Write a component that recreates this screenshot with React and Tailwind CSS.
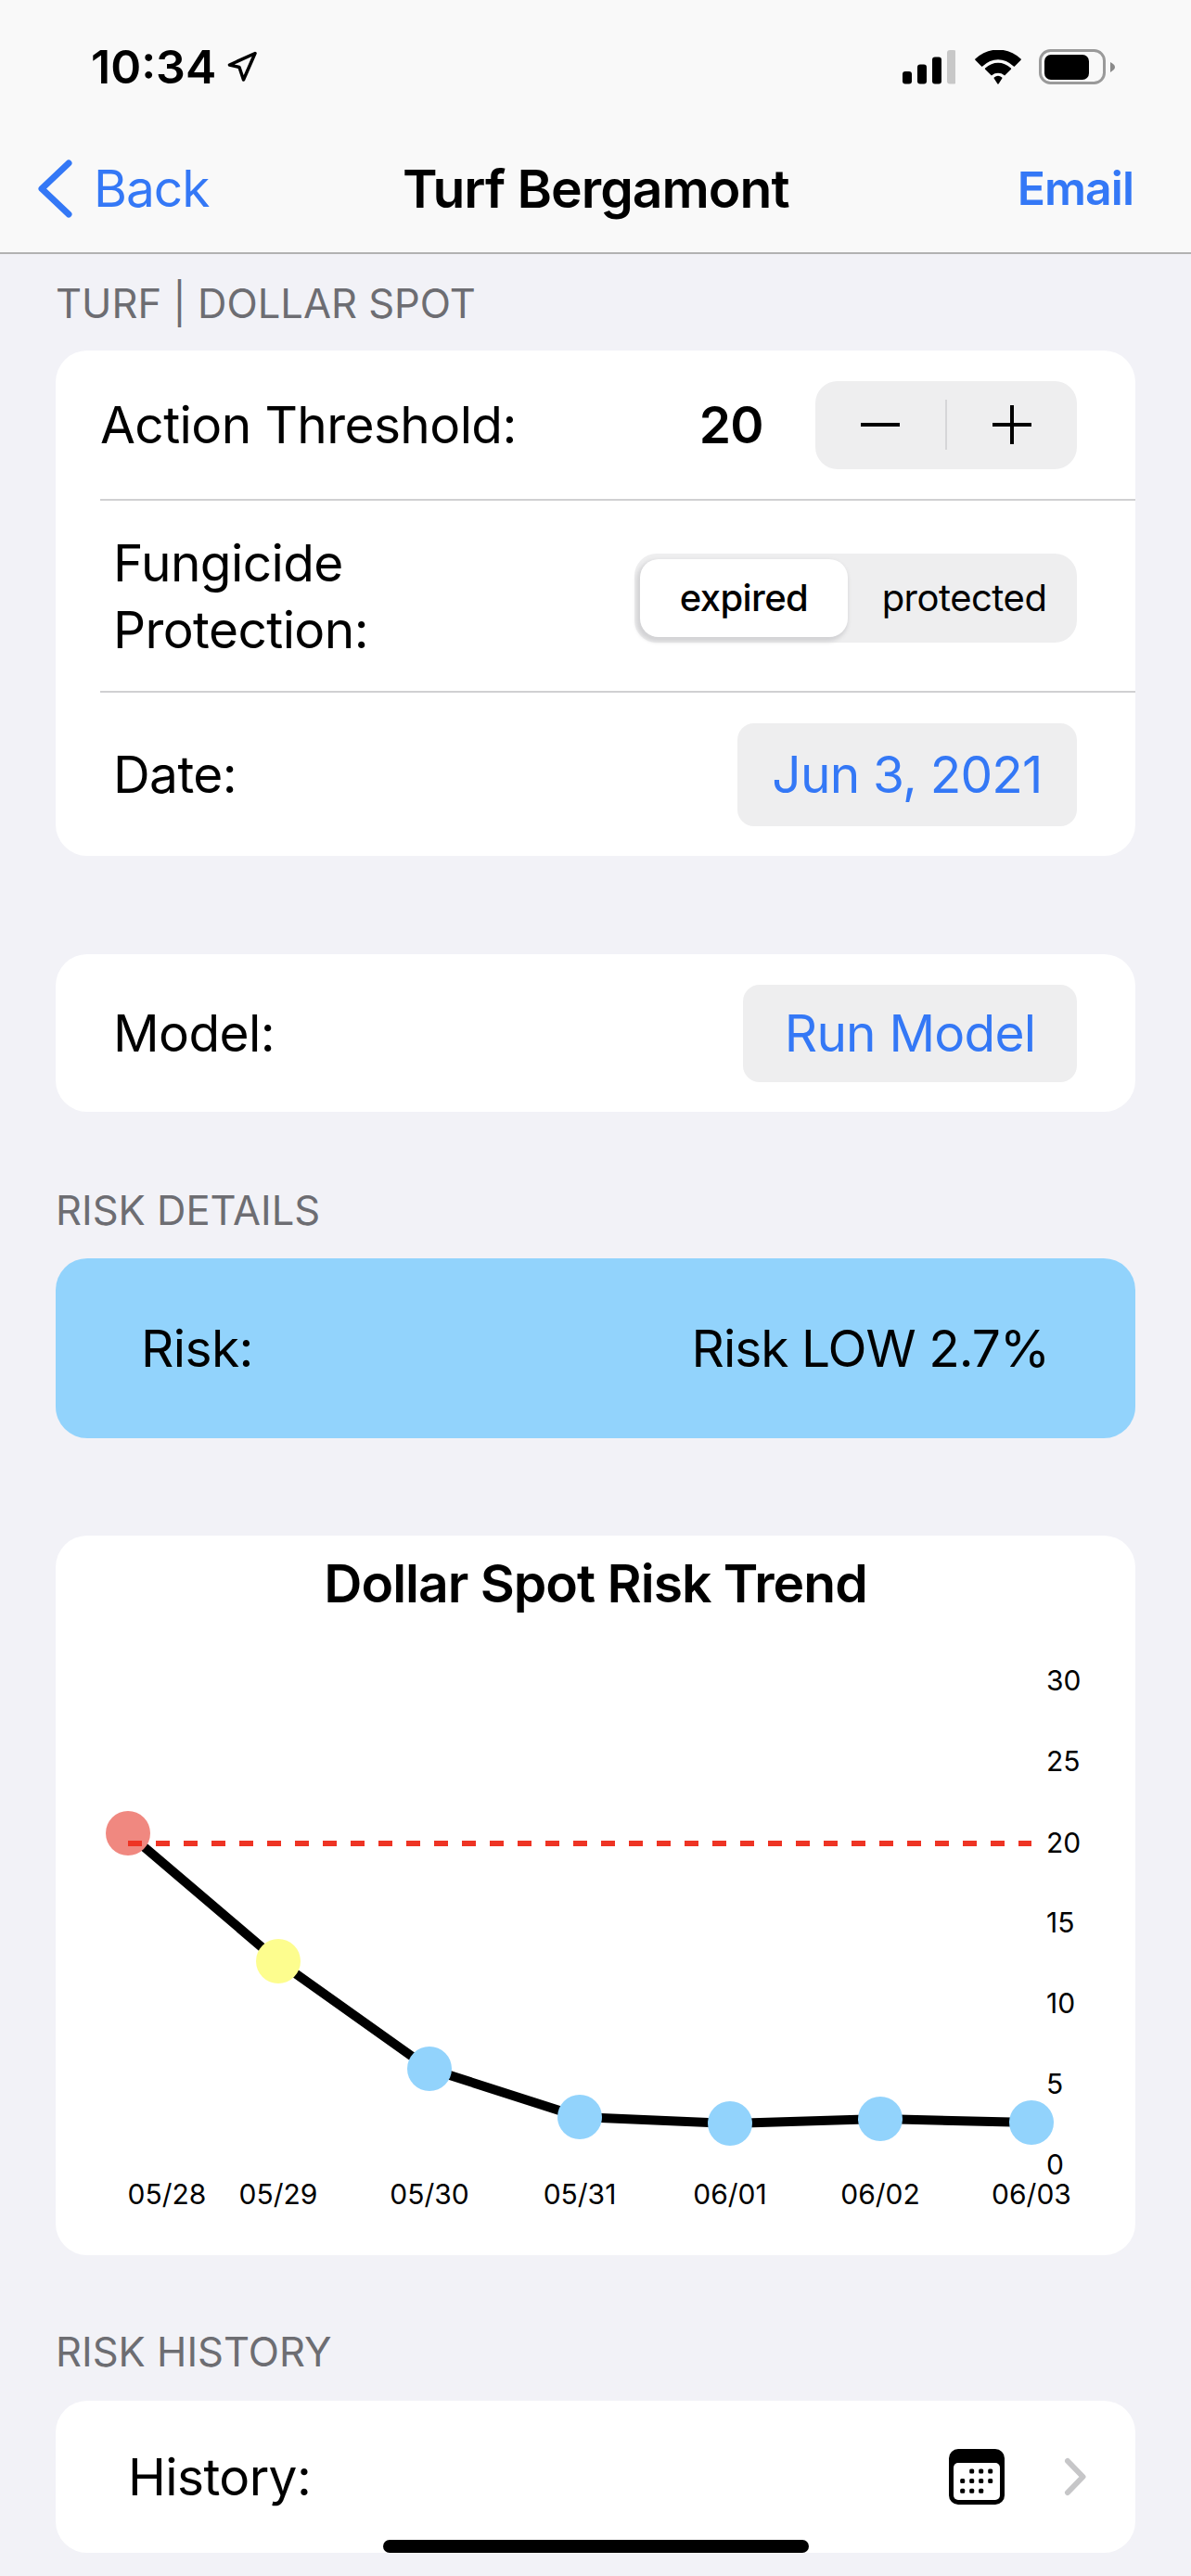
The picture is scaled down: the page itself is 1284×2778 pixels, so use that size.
import React from "react";

const points = [
  { x: 138, y: 1977, color: "#f08880" },
  { x: 300, y: 2115, color: "#fdfd8e" },
  { x: 463, y: 2231, color: "#92d3fc" },
  { x: 625, y: 2283, color: "#92d3fc" },
  { x: 787, y: 2290, color: "#92d3fc" },
  { x: 949, y: 2285, color: "#92d3fc" },
  { x: 1112, y: 2289, color: "#92d3fc" },
];

const yLabels = [
  ["30", 1812],
  ["25", 1899],
  ["20", 1987],
  ["15", 2073],
  ["10", 2160],
  ["5", 2247],
  ["0", 2334],
];

const xLabels = [
  ["05/28", 180],
  ["05/29", 300],
  ["05/30", 463],
  ["05/31", 625],
  ["06/01", 787],
  ["06/02", 949],
  ["06/03", 1112],
];

const calendarDots = [
  [24.7, 34.7, 44.7],
  [14.7, 24.7, 34.7, 44.7],
  [14.7, 24.7, 34.7],
];

const SectionLabel = ({ children, className }) => (
  <div className={`text-[43.5px] leading-[48px] text-[#6d6d72] ${className}`}>
    {children}
  </div>
);

const StatusIcons = () => (
  <div className="flex items-center">
    <svg width="57" height="38" viewBox="0 0 57 38">
      <rect x="0" y="24" width="10" height="13.5" rx="3" fill="#000" />
      <rect x="16" y="16.5" width="10" height="21" rx="3" fill="#000" />
      <rect x="32" y="8.5" width="10" height="29" rx="3" fill="#000" />
      <rect x="48" y="1" width="10" height="36.5" rx="3" fill="#c8c8c8" />
    </svg>
    <svg width="50" height="37" viewBox="0 0 150 110" className="ml-[21px]">
      <path d="M3 30 C44 -9 106 -9 147 30 L127 50 C95 20 55 20 23 50 Z" fill="#000" stroke="#000" strokeWidth="5" strokeLinejoin="round" />
      <path d="M35 60 C60 38 90 38 115 60 L96 79 C85 69 65 69 54 79 Z" fill="#000" stroke="#000" strokeWidth="5" strokeLinejoin="round" />
      <path d="M64 90 C71 84 79 84 86 90 L75 107 Z" fill="#000" stroke="#000" strokeWidth="5" strokeLinejoin="round" />
    </svg>
    <svg width="82" height="38" viewBox="0 0 82 38" className="ml-[19px]">
      <rect x="1.5" y="1.5" width="69" height="35" rx="11" fill="none" stroke="#9a9a9a" strokeWidth="3" />
      <rect x="6" y="6" width="48" height="27" rx="7" fill="#000" />
      <path d="M77 14 C80 16 82 17 82 19.5 C82 21.5 80 23 77 25 Z" fill="#8a8a8a" />
    </svg>
  </div>
);

const Header = () => (
  <div className="h-[274px] bg-[#f9f9f9] border-b-[2px] border-[#b2b2b2] flex flex-col">
    <div className="h-[144px] pl-[98px] pr-[82px] flex items-center justify-between">
      <div className="flex items-center gap-[12px]">
        <span className="text-[50px] font-semibold leading-none">10:34</span>
        <svg width="32" height="34" viewBox="0 0 32 34">
          <path d="M30 2.5 L2.5 15 L13 17.5 L17.5 31 Z" fill="none" stroke="#000" strokeWidth="3.5" strokeLinejoin="round" />
        </svg>
      </div>
      <StatusIcons />
    </div>
    <div className="flex-1 relative flex items-center justify-between pl-[40px] pr-[62px] pb-[10px]">
      <div className="flex items-center gap-[23px] text-[#3478f6]">
        <svg width="38" height="63" viewBox="0 0 38 63">
          <path d="M34 4 L5 31.5 L34 59" fill="none" stroke="#3478f6" strokeWidth="7" strokeLinecap="round" strokeLinejoin="round" />
        </svg>
        <span className="text-[55px] leading-none tracking-[-1px]">Back</span>
      </div>
      <span className="absolute left-[434px] text-[57px] font-semibold leading-none tracking-[-1px]">Turf Bergamont</span>
      <span className="text-[#3478f6] text-[50px] font-semibold leading-none tracking-[-1px]">Email</span>
    </div>
  </div>
);

const Divider = () => <div className="ml-[48px] h-[2px] bg-[#d0d0d2]" />;

const Stepper = () => (
  <div className="w-[282px] h-[95px] rounded-[24px] bg-[#eeeeef] flex items-center">
    <div className="flex-1 flex justify-center">
      <svg width="44" height="44" viewBox="0 0 44 44">
        <path d="M1 22 H43" stroke="#000" strokeWidth="4" />
      </svg>
    </div>
    <div className="w-[2px] h-[54px] bg-[#d6d6d8]" />
    <div className="flex-1 flex justify-center">
      <svg width="44" height="44" viewBox="0 0 44 44">
        <path d="M1 22 H43 M22 1 V43" stroke="#000" strokeWidth="4" />
      </svg>
    </div>
  </div>
);

const SegmentControl = () => (
  <div className="w-[477px] h-[96px] mt-[4px] rounded-[24px] bg-[#eeeeef] flex items-center pl-[6px]">
    <div className="w-[224px] h-[84px] rounded-[20px] bg-white shadow-[-2px_3px_4px_2px_#d3d3d5] flex items-center justify-center text-[40px] font-medium tracking-[-0.6px]">
      expired
    </div>
    <div className="flex-1 pl-[4px] text-center text-[40px] tracking-[-0.5px]">protected</div>
  </div>
);

const BlueButton = ({ children, className }) => (
  <div className={`rounded-[18px] bg-[#eeeeef] flex items-center justify-center text-[#3478f6] text-[55px] tracking-[-0.8px] ${className}`}>
    {children}
  </div>
);

const Chart = () => (
  <div className="mt-[105px] h-[776px] rounded-[34px] bg-white overflow-hidden">
    <div className="h-[64px] pt-[22px] text-center text-[57px] font-semibold leading-[60px] tracking-[-1px] text-black">
      Dollar Spot Risk Trend
    </div>
    <svg width="1164" height="692" viewBox="60 1740 1164 692" className="block mt-[20px] font-['Inter']">
      <polyline
        points={points.map((p) => `${p.x},${p.y}`).join(" ")}
        fill="none"
        stroke="#000"
        strokeWidth="10"
      />
      {points.map((p) => (
        <circle key={p.x} cx={p.x} cy={p.y} r="24" fill={p.color} />
      ))}
      <line x1="138" y1="1988" x2="1112" y2="1988" stroke="#ee3424" strokeWidth="6" strokeDasharray="15 15" />
      {yLabels.map(([label, y]) => (
        <text key={label} x="1128" y={y + 11} fontSize="30" fill="#000">
          {label}
        </text>
      ))}
      {xLabels.map(([label, x]) => (
        <text key={label} x={x} y="2377" fontSize="30" textAnchor="middle" fill="#000">
          {label}
        </text>
      ))}
    </svg>
  </div>
);

const App = () => (
  <div className="relative w-[1284px] h-[2778px] overflow-hidden bg-[#f2f2f7] text-black font-['Inter',sans-serif]">
    <Header />
    <div className="px-[60px]">
      <SectionLabel className="mt-[29px]">TURF | DOLLAR SPOT</SectionLabel>
      <div className="mt-[27px] rounded-[34px] bg-white text-[55px] tracking-[-0.6px]">
        <div className="h-[160px] flex items-center pl-[48px] pr-[63px]">
          <span>Action Threshold:</span>
          <span className="ml-auto mr-[56px] font-semibold">20</span>
          <Stepper />
        </div>
        <Divider />
        <div className="h-[205px] flex items-center justify-between pl-[62px] pr-[63px]">
          <span className="leading-[72px]">
            Fungicide
            <br />
            Protection:
          </span>
          <SegmentControl />
        </div>
        <Divider />
        <div className="h-[176px] flex items-center justify-between pl-[62px] pr-[63px]">
          <span>Date:</span>
          <BlueButton className="w-[366px] h-[111px]">Jun 3, 2021</BlueButton>
        </div>
      </div>

      <div className="mt-[106px] h-[170px] rounded-[34px] bg-white flex items-center justify-between pl-[62px] pr-[63px] text-[55px] tracking-[-0.6px]">
        <span>Model:</span>
        <BlueButton className="w-[360px] h-[105px]">Run Model</BlueButton>
      </div>

      <SectionLabel className="mt-[82px]">RISK DETAILS</SectionLabel>
      <div className="mt-[28px] h-[194px] rounded-[34px] bg-[#92d3fc] flex items-center justify-between pl-[92px] pr-[93px] text-[55px] tracking-[-0.6px]">
        <span>Risk:</span>
        <span className="tracking-[-1px]">Risk LOW 2.7%</span>
      </div>

      <Chart />

      <SectionLabel className="mt-[80px]">RISK HISTORY</SectionLabel>
      <div className="mt-[29px] h-[164px] rounded-[34px] bg-white flex items-center pl-[78px] pr-[53px] text-[55px] tracking-[-0.6px]">
        <span>History:</span>
        <svg width="60" height="60" viewBox="0 0 60 60" className="ml-auto">
          <rect x="0" y="0" width="60" height="60" rx="10" fill="#000" />
          <rect x="5" y="15" width="50" height="40" rx="5" fill="#fff" />
          {calendarDots.map((row, i) =>
            row.map((x) => (
              <rect key={`${i}-${x}`} x={x - 2.5} y={21.5 + i * 10.6} width="5" height="5" rx="1.5" fill="#000" />
            ))
          )}
        </svg>
        <svg width="26" height="44" viewBox="0 0 26 44" className="ml-[62px]">
          <path d="M6 5 L22.5 22 L6 39" fill="none" stroke="#c6c6c8" strokeWidth="6" strokeLinecap="round" strokeLinejoin="round" />
        </svg>
      </div>
    </div>
    {/* home indicator floats above the last card */}
    <div className="absolute left-[413px] top-[2739px] w-[459px] h-[14px] rounded-full bg-black" />
  </div>
);

export default App;
